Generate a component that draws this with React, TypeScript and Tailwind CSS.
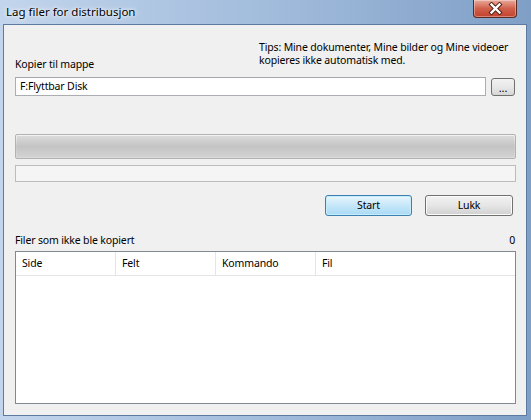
import React from 'react';

const FONT = { fontFamily: '"Segoe UI", "Noto Sans", "Open Sans", sans-serif' };

const COLUMNS = ['Side', 'Felt', 'Kommando', 'Fil'];

function CloseButton() {
  return (
    <div className="w-[44px] h-[18px] rounded-b-[4px] border border-t-0 border-[#5a2a22] bg-gradient-to-b from-[#e9a99b] via-[#d0604a] to-[#c2412b] flex items-center justify-center shadow-[inset_0_0_0_1px_rgba(255,255,255,0.35)]">
      <svg width="15" height="13" viewBox="0 0 15 13">
        <path d="M3.5 2.5 L11.5 10.5 M11.5 2.5 L3.5 10.5" stroke="#4a1a12" strokeWidth="4.2" strokeLinecap="square" />
        <path d="M3.5 2.5 L11.5 10.5 M11.5 2.5 L3.5 10.5" stroke="#ffffff" strokeWidth="2.4" strokeLinecap="square" />
      </svg>
    </div>
  );
}

export default function App() {
  return (
    <div
      className="w-[531px] h-[420px] flex flex-col bg-gradient-to-r from-[#c2d5ec] via-[#a2bcdc] to-[#7f9fc6] text-[10.5px] tracking-[-0.15px] leading-[13px] text-black"
      style={FONT}
    >
      {/* Title bar */}
      <div className="h-[24px] flex items-start justify-between pl-[6px] pr-[14px]">
        <span className="mt-[5px] text-[11.5px] tracking-normal leading-[14px] [text-shadow:0_0_6px_#ffffff,0_0_3px_#ffffff]">
          Lag filer for distribusjon
        </span>
        <CloseButton />
      </div>

      {/* Client area */}
      <div className="flex-1 ml-[3px] mr-[4px] mb-[4px] border border-[#5d7ba1] bg-[#f0f0f0] flex flex-col pl-[11px] pr-[10px]">
        <div className="flex items-start pt-[16px]">
          <span className="mt-[17px]">Kopier til mappe</span>
          <div className="ml-auto w-[257px] whitespace-nowrap">
            <div>Tips: Mine dokumenter, Mine bilder og Mine videoer</div>
            <div>kopieres ikke automatisk med.</div>
          </div>
        </div>

        <div className="flex items-start mt-[6px]">
          <div className="w-[471px] h-[19px] bg-white border border-[#abadb3] border-t-[#a3a6ae] flex items-center pl-[4px]">
            F:Flyttbar Disk
          </div>
          <button className="ml-[5px] mt-[1px] w-[24px] h-[18px] rounded-[3px] border border-[#707070] bg-gradient-to-b from-[#f2f2f2] via-[#e8e8e8] to-[#d6d6d6] flex items-end justify-center pb-[4px] text-[11px] leading-[6px]">
            ...
          </button>
        </div>

        <div className="mt-[38px] h-[25px] rounded-[2px] border border-[#b2b2b2] bg-gradient-to-b from-[#f3f3f3] via-[#c9c9c9] to-[#dcdcdc] p-[1px]">
          <div className="h-full bg-gradient-to-b from-[#dadada] via-[#c4c4c4] to-[#d2d2d2]" />
        </div>

        <div className="mt-[6px] h-[17px] border border-[#bcbcbc] bg-[#f5f5f5]" />

        <div className="flex mt-[13px] ml-[310px]">
          <button className="w-[87px] h-[21px] rounded-[3px] border border-[#3c7fb1] bg-gradient-to-b from-[#eaf6fd] via-[#c5e7f9] to-[#a9daf5] shadow-[inset_0_0_0_1px_#c7ecfc] flex items-center justify-center">
            Start
          </button>
          <button className="ml-[13px] w-[88px] h-[21px] rounded-[3px] border border-[#707070] bg-gradient-to-b from-[#f2f2f2] via-[#e6e6e6] to-[#d0d0d0] shadow-[inset_0_0_0_1px_#fbfbfb] flex items-center justify-center">
            Lukk
          </button>
        </div>

        <div className="flex justify-between mt-[18px] pr-[1px]">
          <span>Filer som ikke ble kopiert</span>
          <span>0</span>
        </div>

        <div className="mt-[4px] h-[153px] border border-[#828790] bg-white flex flex-col">
          <div className="h-[24px] flex border-b border-[#e5e5e5]">
            {COLUMNS.map((c, i) => (
              <div
                key={c}
                className={`w-[100px] flex items-center pl-[6px] ${i < COLUMNS.length - 1 ? 'border-r border-[#e5e5e5]' : ''}`}
              >
                {c}
              </div>
            ))}
          </div>
        </div>
      </div>
    </div>
  );
}
